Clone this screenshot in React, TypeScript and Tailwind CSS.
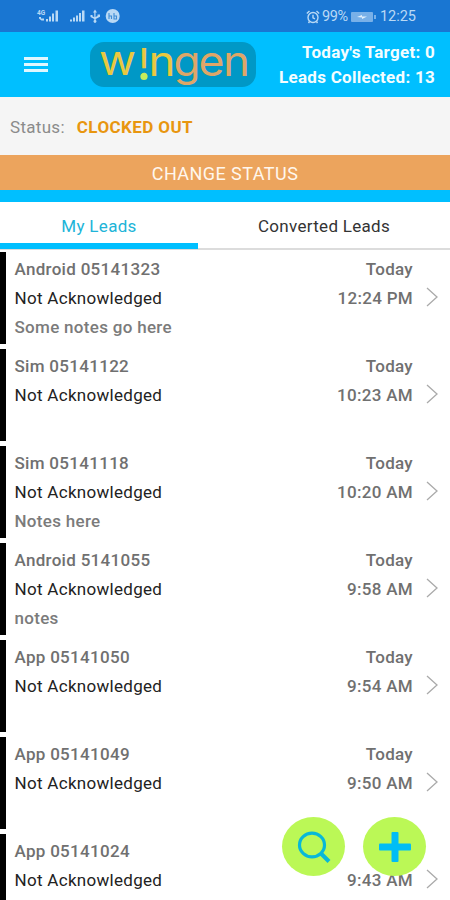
const leads = [
  { name: "Android 05141323", notes: "Some notes go here", time: "12:24 PM" },
  { name: "Sim 05141122", notes: "", time: "10:23 AM" },
  { name: "Sim 05141118", notes: "Notes here", time: "10:20 AM" },
  { name: "Android 5141055", notes: "notes", time: "9:58 AM" },
  { name: "App 05141050", notes: "", time: "9:54 AM" },
  { name: "App 05141049", notes: "", time: "9:50 AM" },
  { name: "App 05141024", notes: "", time: "9:43 AM" },
];

function StatusBar() {
  return (
    <div className="flex h-8 shrink-0 items-center justify-between bg-[#1976d2] pl-[37px] pr-[34px] text-[#b9d9f5]">
      {/* Signal, usb and app icons */}
      <svg className="overflow-visible" width="86" height="16" viewBox="0 0 86 16" fill="currentColor">
        <text x="0" y="7" fontSize="6.5" fontWeight="700" fontFamily="Roboto, sans-serif">4G</text>
        <path d="M2 9h2v1.500h3v2H4.500L2 10.500zM9 11h2v2.500H9zM12 8.500h2v5h-2zM15 5.500h2v8h-2zM18.500 2.500h2.500v11h-2.500z" />
        <path d="M33 11.500h2v2h-2zM36 9.500h2v4h-2zM39 7.500h2v6h-2zM42 5h2v8.500h-2zM45 2.500h2.500v11H45z" />
        <path d="M58 1.500l2 3h-1.500V9l2-1V6.500H63v2.200L58.700 11v1a1.500 1.500 0 1 1-1.400 0v-1L53.500 9V7h2v1.200l1.800 1V4.500H56z" />
        <circle cx="75.700" cy="8" r="7" />
        <path d="M72 5v6M72 8h2.500v3M77 5v6h2.500V8H77" fill="none" stroke="#3f8cd6" strokeWidth="1.100" />
      </svg>
      {/* Alarm, battery and clock */}
      <div className="flex items-center pt-px">
        <svg width="14" height="14" viewBox="0 0 14 14" fill="none" stroke="currentColor" strokeWidth="1.400">
          <circle cx="7" cy="7.500" r="5" />
          <path d="M7 4.800v3l2 1M.8 3.500L3.500 1M13.200 3.500L10.500 1M3.500 11.500L2.500 13M10.500 11.500l1 1.500" />
        </svg>
        <span className="ml-[2px] w-[27px] text-[14.500px] tracking-[-0.300px]">99%</span>
        <svg className="ml-[2px]" width="25" height="12" viewBox="0 0 25 12">
          <rect x="0" y="1" width="22" height="10" rx="1" fill="#78b0e8" />
          <rect x="23" y="4" width="2" height="4" fill="#78b0e8" />
          <path d="M6 6l5-2v1.500h5L11 8V6.500z" fill="#e3f1fd" />
        </svg>
        <span className="ml-[4px] text-[14.500px]">12:25</span>
      </div>
    </div>
  );
}

function Logo() {
  return (
    <svg
      width="166"
      height="47"
      viewBox="0 0 166 47"
      className="ml-[42px] overflow-visible font-['Inter',sans-serif]"
      fontSize="41"
      fill="#eac83f"
    >
      <rect y="1" width="166" height="45" rx="14" fill="#0098c6" />
      <text x="9" y="34" textLength="37" lengthAdjust="spacingAndGlyphs">w</text>
      <text x="54" y="37" textAnchor="middle">!</text>
      <circle cx="54" cy="35.500" r="3.600" fill="#c5ee5b" />
      <text x="58.500" y="34.500" textLength="27" lengthAdjust="spacingAndGlyphs">n</text>
      <g fill="#dfa668">
        <text x="83.500" y="34.500" textLength="27" lengthAdjust="spacingAndGlyphs">g</text>
        <text x="108.500" y="34.500" textLength="26" lengthAdjust="spacingAndGlyphs">e</text>
        <text x="133" y="34.500" textLength="27" lengthAdjust="spacingAndGlyphs">n</text>
      </g>
    </svg>
  );
}

export default function App() {
  return (
    <div className="relative flex h-[900px] w-[450px] flex-col overflow-hidden bg-white font-['Roboto',sans-serif]">
      <StatusBar />

      {/* Header */}
      <header className="flex h-[65px] shrink-0 items-center bg-[#00bfff] pl-6 pr-[15px]">
        <div className="flex w-6 flex-col gap-[3.500px]">
          <div className="h-[2.500px] bg-[#dff7ff]" />
          <div className="h-[2.500px] bg-[#dff7ff]" />
          <div className="h-[2.500px] bg-[#dff7ff]" />
        </div>
        <Logo />
        <div className="ml-auto whitespace-nowrap pt-px text-right text-[17px] font-bold leading-[25px] tracking-[0.270px] text-[#f4fdff]">
          <p>Today's Target: 0</p>
          <p>Leads Collected: 13</p>
        </div>
      </header>

      {/* Clock status */}
      <div className="flex h-[58px] shrink-0 items-center bg-[#f5f5f5] pl-[10px] pt-[3px] text-[17px]">
        <span className="tracking-[0.300px] text-[#8b8b8b]">Status:</span>
        <span className="ml-3 font-bold tracking-[0.400px] text-[#e8960f]">CLOCKED OUT</span>
      </div>
      <button className="h-[35px] shrink-0 bg-[#eca45d] pt-[2px] text-[18px] tracking-[0.450px] text-[#fff7ee]">
        CHANGE STATUS
      </button>
      <div className="h-3 shrink-0 bg-[#00bfff]" />

      {/* Tabs */}
      <div className="flex h-[48px] shrink-0 border-b-2 border-[#dcdcdc] text-[17px] tracking-[0.300px]">
        <button className="-mb-[1px] w-[198px] border-b-[6px] border-[#00bfff] pt-[8px] text-[#20b4d8]">My Leads</button>
        <button className="flex-1 pt-[3px] text-[#333]">Converted Leads</button>
      </div>

      {/* Leads */}
      <div className="flex flex-col gap-[5px] pt-[2px] text-[17px] leading-[29px] tracking-[0.300px]">
        {leads.map((lead) => (
          <div key={lead.name} className="flex h-[92px] shrink-0 border-l-[6px] border-black pl-[8.500px] pr-[11px] pt-[3px]">
            <div className="flex-1">
              <p className="font-medium text-[#707070]">{lead.name}</p>
              <p className="text-[#222]">Not Acknowledged</p>
              <p className="font-medium text-[#7b7b7b]">{lead.notes}</p>
            </div>
            <div className="text-right font-medium text-[#707070]">
              <p>Today</p>
              <p>{lead.time}</p>
            </div>
            <svg className="ml-[12px] mt-[31px]" width="14" height="22" viewBox="0 0 14 22" fill="none" stroke="#aaa" strokeWidth="1.300">
              <path d="M2 2l10 9L2 20" />
            </svg>
          </div>
        ))}
      </div>

      {/* Floating buttons */}
      <div className="absolute bottom-6 right-6 flex gap-[18px]">
        <button className="flex h-[59px] w-[63px] items-center justify-center rounded-[50%] bg-[#bbf856]">
          <svg width="34" height="32" viewBox="0 0 34 32" fill="none" stroke="#08b8d8" strokeWidth="3.200">
            <ellipse cx="15" cy="14" rx="12.500" ry="11.800" />
            <path d="M24 22.500l8 8" strokeWidth="4" />
          </svg>
        </button>
        <button className="flex h-[59px] w-[63px] items-center justify-center rounded-[50%] bg-[#bbf856]">
          <svg width="34" height="32" viewBox="0 0 34 32" fill="#00bdf5">
            <rect x="13.500" y="1" width="7" height="30" rx="1" />
            <rect x="1" y="12.500" width="32" height="7" rx="1" />
          </svg>
        </button>
      </div>
    </div>
  );
}
